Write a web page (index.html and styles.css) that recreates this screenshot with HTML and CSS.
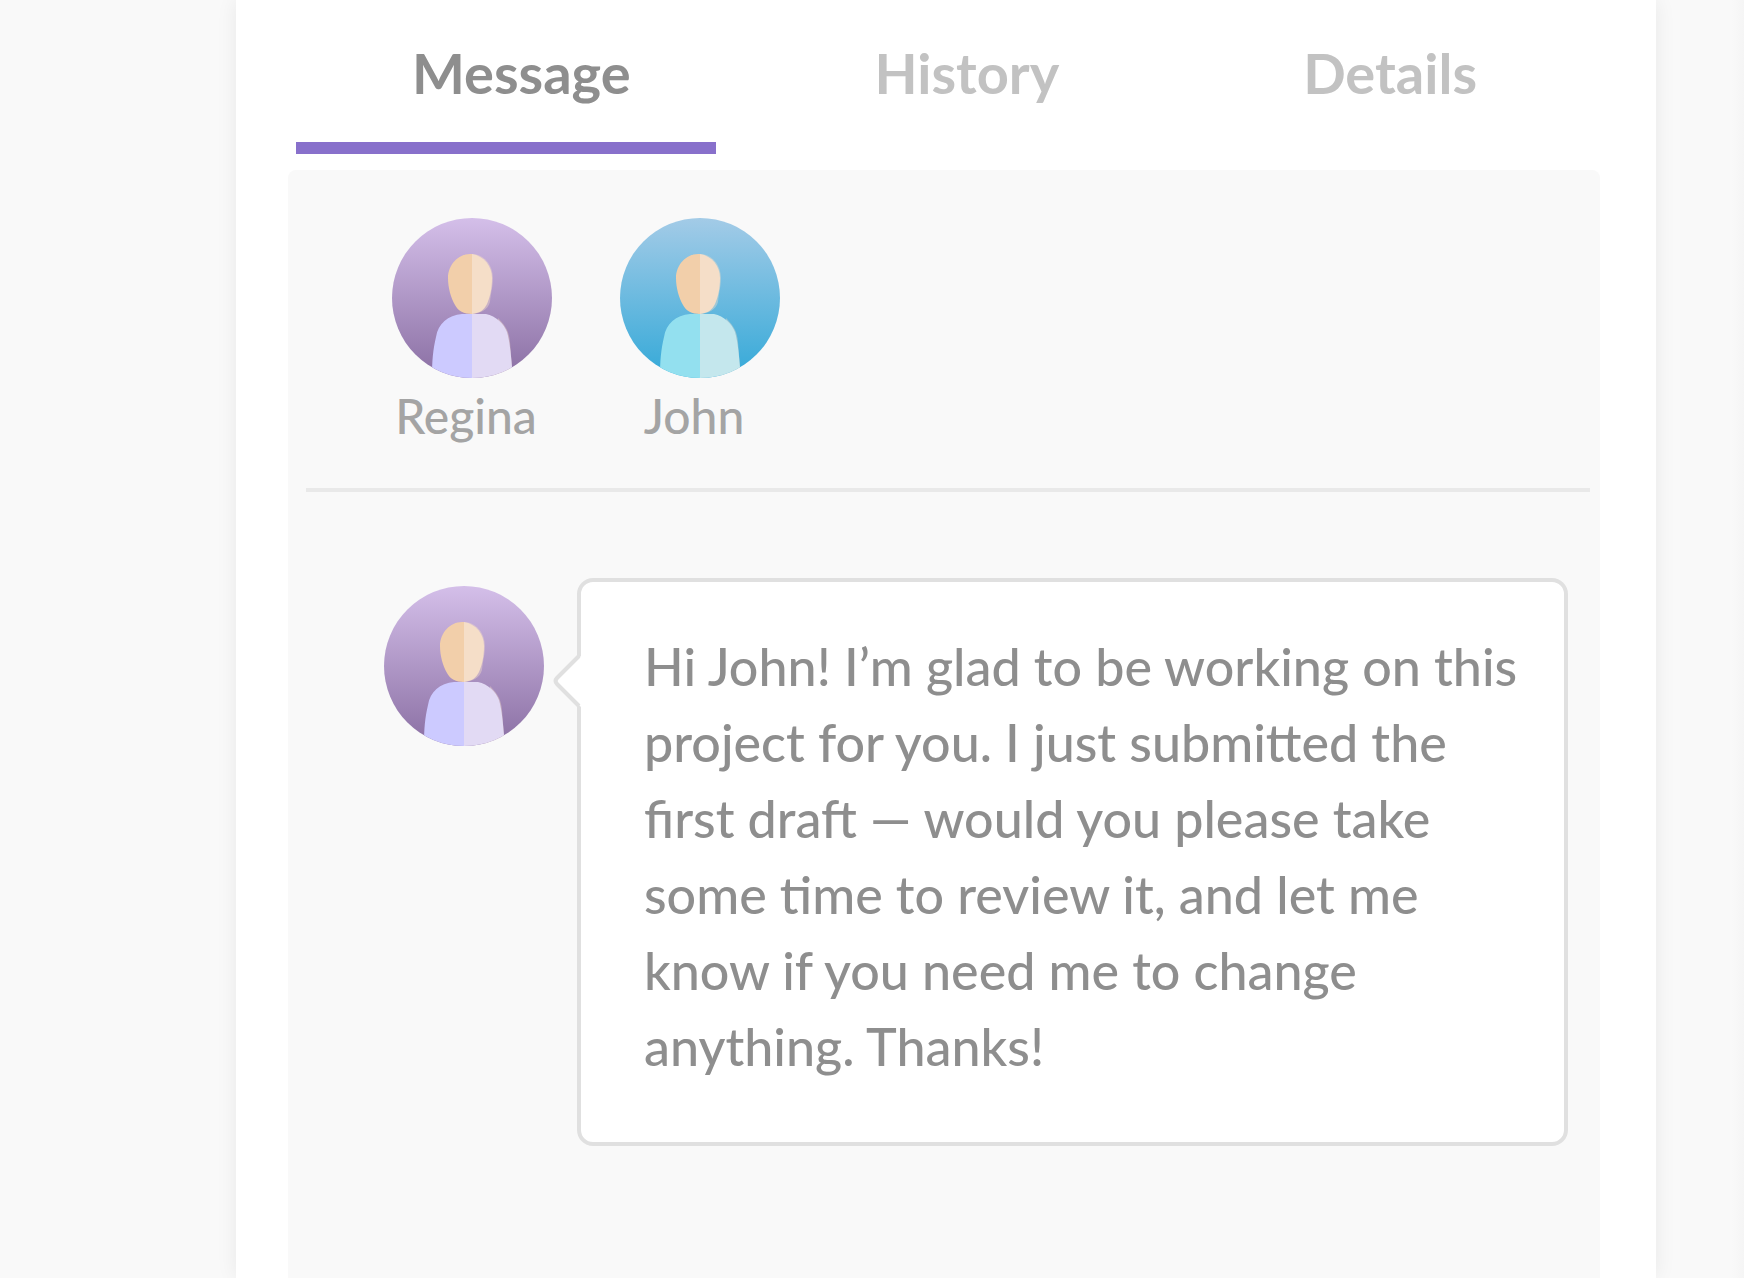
FILE: index.html
```html
<!DOCTYPE html>
<html lang="en">
<head>
<meta charset="utf-8">
<title>Message</title>
<meta name="viewport" content="width=device-width, initial-scale=1">
<link rel="stylesheet" href="styles.css">
</head>
<body>
<svg class="defs" aria-hidden="true">
  <defs>
    <linearGradient id="violet" x1="0" y1="0" x2="0" y2="1">
      <stop offset="0" stop-color="#d4bfe9"/>
      <stop offset="1" stop-color="#8a6fa3"/>
    </linearGradient>
    <linearGradient id="blue" x1="0" y1="0" x2="0" y2="1">
      <stop offset="0" stop-color="#a3cbe7"/>
      <stop offset="1" stop-color="#34a9d8"/>
    </linearGradient>
    <symbol id="person" viewBox="0 0 160 160">
      <path class="shade" d="M80 36C92 36 101 47 101 60C101 68 99 74 98 84C96 92 88 96 78 96Z"/>
      <path class="skin-left" d="M80 36H78C66 36 56 47 56 60C56 70 59 80 63 87C66 93 72 96 80 96Z"/>
      <path class="skin-right" d="M80 36C92 38 100 48 100 60C100 71 98 79 95 86C92 92 88 95 80 96Z"/>
      <path class="shade" d="M106 100C114 108 117 114 118 124L120 149V160H100Z"/>
      <path class="body-left" d="M80 96H70C56 97 46 106 44 119C41 132 40 142 40 160H80Z"/>
      <path class="body-right" d="M80 96H94C104 98 112 106 115 114C118 124 119 138 120 149V160H80Z"/>
    </symbol>
  </defs>
</svg>
<div class="board">
  <main class="card">
    <nav class="tabs" role="tablist" aria-label="Project">
      <button class="tab tab-active" type="button" role="tab" aria-selected="true">Message</button>
      <button class="tab" type="button" role="tab" aria-selected="false">History</button>
      <button class="tab" type="button" role="tab" aria-selected="false">Details</button>
    </nav>
    <section class="panel">
      <ul class="people">
        <li class="person">
          <svg class="avatar avatar-violet" viewBox="0 0 160 160" aria-hidden="true"><rect width="160" height="160" fill="url(#violet)"/><use href="#person"/></svg>
          <span class="name">Regina</span>
        </li>
        <li class="person">
          <svg class="avatar avatar-blue" viewBox="0 0 160 160" aria-hidden="true"><rect width="160" height="160" fill="url(#blue)"/><use href="#person"/></svg>
          <span class="name">John</span>
        </li>
      </ul>
      <hr class="divider">
      <article class="message">
        <svg class="avatar avatar-violet" viewBox="0 0 160 160" role="img" aria-label="Regina"><rect width="160" height="160" fill="url(#violet)"/><use href="#person"/></svg>
        <div class="bubble">
          <svg class="pointer" viewBox="0 0 28 56" aria-hidden="true"><path class="pointer-fill" d="M28 3L5 24Q2 28 5 32L28 54Z"/><path class="pointer-line" d="M26 3L4 25Q1 28 4 31L26 53"/></svg>
          <p class="text">Hi John! I’m glad to be working on this project for you. I just submitted the first draft — would you please take some time to review it, and let me know if you need me to change anything. Thanks!</p>
        </div>
      </article>
    </section>
  </main>
</div>
</body>
</html>
```
FILE: styles.css
```css
* {
  box-sizing: border-box;
}

body {
  margin: 0;
  background: #f9f9f9;
  font-family: Lato, "Liberation Sans", sans-serif;
}

.defs {
  position: absolute;
  width: 0;
  height: 0;
}

.board {
  display: flex;
  min-height: 100vh;
  padding: 0 88px 0 236px;
  background: linear-gradient(to left, #f5f5f5, #f9f9f9 12px);
}

.card {
  display: flex;
  flex: 1;
  flex-direction: column;
  min-width: 0;
  padding: 0 56px 0 52px;
  background: #fff;
  box-shadow: 0 0 20px rgba(0, 0, 0, 0.07);
}

.tabs {
  display: flex;
  justify-content: space-between;
  padding: 0 38px 0 8px;
  margin-bottom: 16px;
}

.tab {
  height: 154px;
  padding: 4px 85px 0 116px;
  border: 0;
  border-bottom: 12px solid transparent;
  background: none;
  color: #c2c2c2;
  font: 700 56px/68px Lato, "Liberation Sans", sans-serif;
}

.tab-active {
  border-color: #8870cb;
  color: #8e8e8e;
}

.panel {
  flex: 1;
  border-radius: 8px 8px 0 0;
  background: #f9f9f9;
}

.people {
  display: flex;
  gap: 68px;
  margin: 0;
  padding: 48px 104px 42px;
  list-style: none;
}

.person {
  display: flex;
  flex-direction: column;
  gap: 8px;
}

.avatar {
  display: block;
  flex: none;
  width: 160px;
  height: 160px;
  border-radius: 50%;
  overflow: hidden;
}

.avatar-violet {
  --body-left: #cccaff;
  --body-right: #e2daf4;
}

.avatar-blue {
  --body-left: #93e0ef;
  --body-right: #c4e7ed;
}

.skin-left { fill: #f2cfaa; }
.skin-right { fill: #f5dec8; }
.body-left { fill: var(--body-left); }
.body-right { fill: var(--body-right); }
.shade { fill: #f5dec8; opacity: 0.4; }

.name {
  padding-right: 12px;
  color: #a4a4a4;
  font-size: 48px;
  font-weight: 500;
  line-height: 60px;
  text-align: center;
}

.divider {
  height: 4px;
  margin: 0 10px 0 18px;
  border: 0;
  background: #e9e9e9;
}

.message {
  display: flex;
  align-items: flex-start;
  gap: 33px;
  padding: 86px 32px 86px 96px;
}

.message .avatar {
  margin-top: 8px;
}

.bubble {
  position: relative;
  flex: 1;
  min-width: 0;
  padding: 46px 40px 58px 63px;
  border: 4px solid #e0e0e0;
  border-radius: 16px;
  background: #fff;
}

.pointer {
  position: absolute;
  top: 71px;
  left: -28px;
  width: 28px;
  height: 56px;
}

.pointer-fill { fill: #fff; }

.pointer-line {
  fill: none;
  stroke: #e0e0e0;
  stroke-width: 4;
}

.text {
  margin: 0;
  color: #8e8e8e;
  font-size: 52px;
  font-weight: 500;
  line-height: 76px;
}
```
